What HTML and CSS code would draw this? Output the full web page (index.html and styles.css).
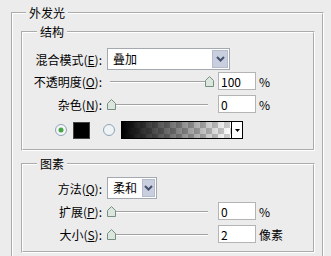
FILE: index.html
```html
<!DOCTYPE html>
<html lang="zh-CN">
<head>
    <meta charset="UTF-8">
    <meta name="viewport" content="width=device-width, initial-scale=1.0">
    <title>外发光</title>
    <link rel="stylesheet" href="styles.css">
</head>
<body>
    <fieldset class="group outer">
        <legend>外发光</legend>

        <!-- 结构 -->
        <fieldset class="group inner">
            <legend>结构</legend>
            <div class="rows first">
                <div class="row r22">
                    <label class="lbl">混合模式(<u>E</u>):</label>
                    <div class="select wide">
                        <span class="val">叠加</span>
                        <span class="drop"><svg width="9" height="6" viewBox="0 0 9 6"><path d="M1 1l3.5 3.5L8 1" fill="none" stroke="#44506c" stroke-width="2"/></svg></span>
                    </div>
                </div>
                <div class="row r22">
                    <label class="lbl">不透明度(<u>O</u>):</label>
                    <div class="slider"><span class="thumb" style="margin-left: 98px"><svg width="9" height="11" viewBox="0 0 9 11"><path d="M.5 4.5 4.5.5l4 4v6h-8z" fill="#dbe6de" stroke="#778f7f"/></svg></span></div>
                    <input class="num" type="text" value="100">
                    <span class="unit">%</span>
                </div>
                <div class="row r24">
                    <label class="lbl">杂色(<u>N</u>):</label>
                    <div class="slider"><span class="thumb" style="margin-left: 0px"><svg width="9" height="11" viewBox="0 0 9 11"><path d="M.5 4.5 4.5.5l4 4v6h-8z" fill="#dbe6de" stroke="#778f7f"/></svg></span></div>
                    <input class="num" type="text" value="0">
                    <span class="unit">%</span>
                </div>
                <div class="row r28 colors">
                    <svg class="radio" width="12" height="12" viewBox="0 0 12 12"><circle cx="6" cy="6" r="5.5" fill="#f3f5f7" stroke="#8ea3b6"/><circle cx="6" cy="6" r="2.5" fill="#47a547"/></svg>
                    <span class="swatch"></span>
                    <svg class="radio second" width="12" height="12" viewBox="0 0 12 12"><circle cx="6" cy="6" r="5.5" fill="#eef3f6" stroke="#8ea3b6"/></svg>
                    <div class="gradient">
                        <span class="ramp"></span>
                        <span class="arrow"><svg width="5" height="3" viewBox="0 0 5 3"><path d="M0 0h5L2.5 3z" fill="#000"/></svg></span>
                    </div>
                </div>
            </div>
        </fieldset>

        <!-- 图素 -->
        <fieldset class="group inner">
            <legend>图素</legend>
            <div class="rows second">
                <div class="row r24">
                    <label class="lbl">方法(<u>Q</u>):</label>
                    <div class="select narrow">
                        <span class="val">柔和</span>
                        <span class="drop"><svg width="9" height="6" viewBox="0 0 9 6"><path d="M1 1l3.5 3.5L8 1" fill="none" stroke="#44506c" stroke-width="2"/></svg></span>
                    </div>
                </div>
                <div class="row r22">
                    <label class="lbl">扩展(<u>P</u>):</label>
                    <div class="slider"><span class="thumb" style="margin-left: 0px"><svg width="9" height="11" viewBox="0 0 9 11"><path d="M.5 4.5 4.5.5l4 4v6h-8z" fill="#dbe6de" stroke="#778f7f"/></svg></span></div>
                    <input class="num" type="text" value="0">
                    <span class="unit">%</span>
                </div>
                <div class="row r24">
                    <label class="lbl">大小(<u>S</u>):</label>
                    <div class="slider"><span class="thumb" style="margin-left: 0px"><svg width="9" height="11" viewBox="0 0 9 11"><path d="M.5 4.5 4.5.5l4 4v6h-8z" fill="#dbe6de" stroke="#778f7f"/></svg></span></div>
                    <input class="num" type="text" value="2">
                    <span class="unit">像素</span>
                </div>
            </div>
        </fieldset>
    </fieldset>
</body>
</html>
```

FILE: styles.css
```css
body {
    margin: 0;
    background-color: #ececec;
    font-family: "Noto Sans CJK SC", "Noto Sans", sans-serif;
    font-size: 12px;
    color: #000;
    overflow: hidden;
}

/* Moldura "gravada" estilo Windows */
.group {
    border: 2px groove #ffffff;
    margin: 0;
    padding: 0;
    min-width: 0;
    box-sizing: border-box;
}

.group legend {
    padding: 0 3px;
    line-height: 16px;
}

.outer {
    margin: 5px 0 0 11px;
    width: 313px;
    padding-bottom: 20px;
}

.outer > legend {
    margin-left: 13px;
}

.inner {
    margin: 3px 0 0 8px;
    width: 294px;
}

.inner > legend {
    margin-left: 14px;
}

.inner + .inner {
    margin-top: 5px;
}

.rows.first {
    padding: 8px 0 5px;
}

.rows.second {
    padding: 4px 0 5px;
}

.row {
    display: flex;
    align-items: center;
}

.r22 { height: 22px; }
.r24 { height: 24px; }
.r28 { height: 28px; }

.lbl {
    width: 79px;
    margin-right: 5px;
    text-align: right;
    white-space: nowrap;
}

/* Caixa de seleção */
.select {
    display: flex;
    height: 22px;
    box-sizing: border-box;
    border: 1px solid #a4a9b0;
    background-color: #ffffff;
}

.select.wide {
    width: 123px;
}

.select.narrow {
    width: 50px;
}

.select .val {
    flex: 1;
    padding-left: 5px;
    line-height: 20px;
    white-space: nowrap;
}

.select .drop {
    width: 16px;
    margin: 1px;
    box-sizing: border-box;
    border: 1px solid #b3bbcd;
    background-color: #c9cfde;
    display: flex;
    align-items: center;
    justify-content: center;
}

.select.narrow .drop {
    width: 13px;
}

/* Controle deslizante */
.slider {
    width: 107px;
    height: 11px;
    display: flex;
    align-items: center;
    background:
        linear-gradient(#a2a2a2, #a2a2a2) 3px 5px / 98px 1px no-repeat,
        linear-gradient(#ffffff, #ffffff) 3px 6px / 98px 1px no-repeat;
}

.thumb {
    display: flex;
}

.num {
    width: 38px;
    height: 18px;
    box-sizing: border-box;
    margin: 0 0 0 4px;
    padding: 0 2px;
    border: 1px solid #b4b4b4;
    background-color: #ffffff;
    font: inherit;
    color: #000;
}

.unit {
    margin-left: 3px;
}

/* Cores */
.colors {
    padding-left: 32px;
}

.swatch {
    width: 17px;
    height: 17px;
    margin-left: 6px;
    box-sizing: border-box;
    border: 1px solid #444;
    background-color: #000;
}

.radio.second {
    margin-left: 13px;
}

.gradient {
    display: flex;
    width: 122px;
    height: 18px;
    margin-left: 6px;
    box-sizing: border-box;
    border: 1px solid #000;
}

.ramp {
    flex: 1;
    background:
        linear-gradient(to right, #000 0%, rgba(0, 0, 0, 0.55) 45%, rgba(0, 0, 0, 0) 100%),
        repeating-conic-gradient(#cfcfcf 0 25%, #ffffff 0 50%) 0 0 / 12px 12px;
}

.arrow {
    width: 10px;
    border-left: 1px solid #000;
    background-color: #ffffff;
    display: flex;
    align-items: center;
    justify-content: center;
}
```
